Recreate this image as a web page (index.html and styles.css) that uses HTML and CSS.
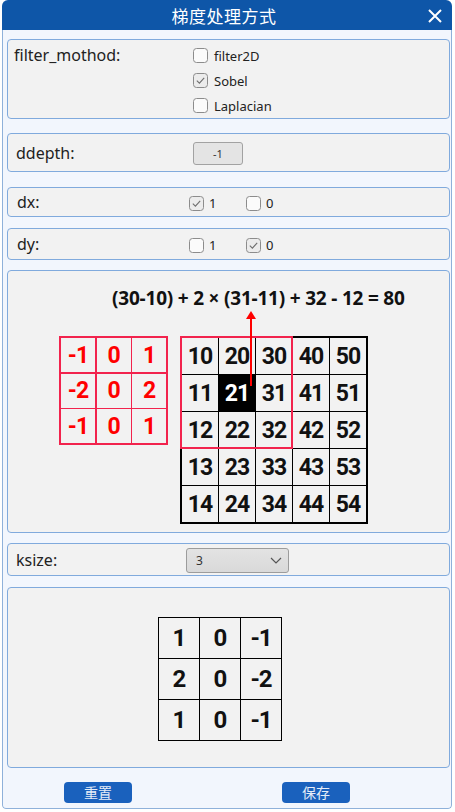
FILE: index.html
```html
<!DOCTYPE html>
<html lang="zh">
<head>
<meta charset="utf-8">
<title>梯度处理方式</title>
<link rel="stylesheet" href="styles.css">
</head>
<body>
<div class="window">
  <div class="titlebar">
    <span class="title">梯度处理方式</span>
    <svg class="close" width="14" height="14" viewBox="0 0 14 14"><path d="M1 1 L13 13 M13 1 L1 13" stroke="#fff" stroke-width="2" fill="none"/></svg>
  </div>
  <div class="body">
    <section class="group g-filter">
      <div class="label label-top">filter_mothod:</div>
      <div class="options">
        <label class="opt"><svg class="cb" width="15" height="15" viewBox="0 0 15 15"><rect x="0.5" y="0.5" width="14" height="14" rx="3" fill="#fbfbfb" stroke="#8c8c8c"/></svg>filter2D</label>
        <label class="opt"><svg class="cb" width="15" height="15" viewBox="0 0 15 15"><rect x="0.5" y="0.5" width="14" height="14" rx="3" fill="#ececec" stroke="#8c8c8c"/><path d="M3.8 7.6 L6.4 10.2 L11.2 4.8" stroke="#6f6f6f" stroke-width="1.1" fill="none"/></svg>Sobel</label>
        <label class="opt"><svg class="cb" width="15" height="15" viewBox="0 0 15 15"><rect x="0.5" y="0.5" width="14" height="14" rx="3" fill="#fbfbfb" stroke="#8c8c8c"/></svg>Laplacian</label>
      </div>
    </section>

    <section class="group g-ddepth">
      <div class="label w-ddepth">ddepth:</div>
      <div class="btn-gray">-1</div>
    </section>

    <section class="group g-dx">
      <div class="label w-dx">dx:</div>
      <label class="opt inline"><svg class="cb" width="15" height="15" viewBox="0 0 15 15"><rect x="0.5" y="0.5" width="14" height="14" rx="3" fill="#ececec" stroke="#8c8c8c"/><path d="M3.8 7.6 L6.4 10.2 L11.2 4.8" stroke="#6f6f6f" stroke-width="1.1" fill="none"/></svg>1</label>
      <label class="opt inline"><svg class="cb" width="15" height="15" viewBox="0 0 15 15"><rect x="0.5" y="0.5" width="14" height="14" rx="3" fill="#fbfbfb" stroke="#8c8c8c"/></svg>0</label>
    </section>

    <section class="group g-dy">
      <div class="label w-dx">dy:</div>
      <label class="opt inline"><svg class="cb" width="15" height="15" viewBox="0 0 15 15"><rect x="0.5" y="0.5" width="14" height="14" rx="3" fill="#fbfbfb" stroke="#8c8c8c"/></svg>1</label>
      <label class="opt inline"><svg class="cb" width="15" height="15" viewBox="0 0 15 15"><rect x="0.5" y="0.5" width="14" height="14" rx="3" fill="#ececec" stroke="#8c8c8c"/><path d="M3.8 7.6 L6.4 10.2 L11.2 4.8" stroke="#6f6f6f" stroke-width="1.1" fill="none"/></svg>0</label>
    </section>

    <section class="group g-diagram">
      <div class="formula">(30-10) + 2 × (31-11) + 32 - 12 = 80</div>
      <div class="diagram">
        <div class="kernel">
          <div>-1</div><div>0</div><div>1</div>
          <div>-2</div><div>0</div><div>2</div>
          <div>-1</div><div>0</div><div>1</div>
        </div>
        <div class="grid-wrap">
          <div class="grid">
            <div>10</div><div>20</div><div>30</div><div>40</div><div>50</div>
            <div>11</div><div class="hl">21</div><div>31</div><div>41</div><div>51</div>
            <div>12</div><div>22</div><div>32</div><div>42</div><div>52</div>
            <div>13</div><div>23</div><div>33</div><div>43</div><div>53</div>
            <div>14</div><div>24</div><div>34</div><div>44</div><div>54</div>
          </div>
          <div class="window-box"></div>
          <div class="arrow"></div>
        </div>
      </div>
    </section>

    <section class="group g-ksize">
      <div class="label w-ksize">ksize:</div>
      <div class="combo">
        <span>3</span>
        <svg width="12" height="7" viewBox="0 0 12 7"><path d="M1 1 L6 6 L11 1" stroke="#555" stroke-width="1.2" fill="none"/></svg>
      </div>
    </section>

    <section class="group g-result">
      <div class="result">
        <div>1</div><div>0</div><div>-1</div>
        <div>2</div><div>0</div><div>-2</div>
        <div>1</div><div>0</div><div>-1</div>
      </div>
    </section>

    <div class="actions">
      <button class="btn">重置</button>
      <button class="btn">保存</button>
    </div>
  </div>
</div>
</body>
</html>
```

FILE: styles.css
```css
html, body {
  margin: 0;
  padding: 0;
  background: #ffffff;
}

.window {
  width: 450px;
  margin-left: 2px;
  border-radius: 6px 6px 4px 4px;
  overflow: hidden;
  font-family: "Noto Sans", "Noto Sans CJK SC", sans-serif;
  color: #1e1e1e;
}

.titlebar {
  height: 30px;
  background: #0e56a8;
  display: flex;
  align-items: center;
  justify-content: center;
  position: relative;
  padding-right: 6px;
}

.title {
  font-family: "Noto Sans CJK SC", sans-serif;
  font-size: 17px;
  color: #ffffff;
  letter-spacing: 0.5px;
}

.close {
  position: absolute;
  right: 10px;
  top: 9px;
}

.body {
  height: 779px;
  box-sizing: border-box;
  background: #f2f6fd;
  border: 1px solid #8fb1da;
  border-top: none;
  border-radius: 0 0 4px 4px;
  padding: 9px 1px 0 4px;
  display: flex;
  flex-direction: column;
}

.group {
  box-sizing: border-box;
  background: #f2f2f2;
  border: 1px solid #80aadd;
  border-radius: 4px;
  display: flex;
}

.label {
  font-size: 16px;
  color: #222;
  flex: none;
}

/* filter_mothod */
.g-filter {
  height: 80px;
  padding: 3px 0 0 6px;
  align-items: flex-start;
}
.label-top {
  width: 179px;
  line-height: 25px;
}
.options {
  display: flex;
  flex-direction: column;
}
.opt {
  display: flex;
  align-items: center;
  height: 25px;
  font-size: 13px;
  color: #222;
}
.cb {
  flex: none;
  margin-right: 6px;
}

/* ddepth */
.g-ddepth {
  height: 39px;
  margin-top: 14px;
  padding-left: 8px;
  align-items: center;
}
.w-ddepth { width: 177px; }
.btn-gray {
  box-sizing: border-box;
  width: 50px;
  height: 23px;
  margin-top: 2px;
  background: #e4e4e4;
  border: 1px solid #a2a2a2;
  border-radius: 3px;
  font-size: 11px;
  color: #333;
  display: flex;
  align-items: center;
  justify-content: center;
}

/* dx / dy */
.g-dx {
  height: 30px;
  margin-top: 15px;
  padding-left: 9px;
  align-items: center;
}
.g-dy {
  height: 32px;
  margin-top: 11px;
  padding-left: 9px;
  align-items: center;
}
.w-dx { width: 172px; }
.opt.inline {
  width: 57px;
  margin-top: 2px;
}
.opt.inline .cb { margin-right: 5px; }

/* diagram */
.g-diagram {
  height: 263px;
  margin-top: 10px;
  padding: 15px 0 0 7px;
  flex-direction: column;
}
.formula {
  font-family: "Noto Sans", sans-serif;
  font-weight: bold;
  font-size: 19px;
  line-height: 24px;
  margin-left: 97px;
  color: #111;
  white-space: nowrap;
  letter-spacing: -0.2px;
}
.diagram {
  display: flex;
  margin-top: 26px;
  margin-left: 44px;
  gap: 12px;
  align-items: flex-start;
}
.kernel {
  display: grid;
  grid-template-columns: repeat(3, 34px);
  grid-template-rows: repeat(3, 34px);
  gap: 1.5px;
  background: #f2234d;
  border: 2px solid #f2234d;
}
.kernel div, .grid div, .result div {
  background: #f2f2f2;
  display: flex;
  align-items: center;
  justify-content: center;
  font-family: "Roboto", "Noto Sans", sans-serif;
  font-weight: bold;
  font-size: 23px;
  letter-spacing: -1px;
}
.kernel div { color: #ff0000; }

.grid-wrap {
  position: relative;
}
.grid {
  display: grid;
  grid-template-columns: repeat(5, 36px);
  grid-template-rows: repeat(5, 36px);
  gap: 1px;
  background: #000;
  border: 2px solid #000;
}
.grid div { color: #111; }
.grid div.hl {
  background: #000;
  color: #fff;
}
.window-box {
  position: absolute;
  left: 0;
  top: 0;
  width: 113px;
  height: 113px;
  box-sizing: border-box;
  border: 2px solid #f2234d;
  pointer-events: none;
}
.arrow {
  position: absolute;
  left: 70px;
  top: -22px;
  width: 2px;
  height: 72px;
  background: #ff0000;
}
.arrow::before {
  content: "";
  position: absolute;
  left: -4px;
  top: -3px;
  border-left: 5px solid transparent;
  border-right: 5px solid transparent;
  border-bottom: 8px solid #ff0000;
}

/* ksize */
.g-ksize {
  height: 33px;
  margin-top: 10px;
  padding-left: 8px;
  align-items: center;
}
.w-ksize { width: 170px; }
.combo {
  box-sizing: border-box;
  width: 103px;
  height: 25px;
  margin-top: 1px;
  background: linear-gradient(#e3e3e3, #d9d9d9);
  border: 1px solid #9c9c9c;
  border-radius: 3px;
  display: flex;
  align-items: center;
  justify-content: space-between;
  padding: 0 6px 0 9px;
  font-size: 12px;
  color: #333;
}

/* result */
.g-result {
  height: 181px;
  margin-top: 11px;
  padding: 29px 0 0 150px;
  align-items: flex-start;
}
.result {
  display: grid;
  grid-template-columns: repeat(3, 40px);
  grid-template-rows: repeat(3, 40px);
  gap: 1px;
  background: #000;
  border: 1px solid #000;
}
.result div {
  color: #111;
  font-size: 24px;
}

/* actions */
.actions {
  display: flex;
  gap: 150px;
  margin-top: 14px;
  padding-left: 57px;
}
.btn {
  width: 68px;
  height: 21px;
  border: none;
  border-radius: 4px;
  background: #1a61bd;
  color: #e6edf8;
  font-family: "Noto Sans CJK SC", sans-serif;
  font-size: 14px;
  padding: 0;
  line-height: 21px;
}
```
